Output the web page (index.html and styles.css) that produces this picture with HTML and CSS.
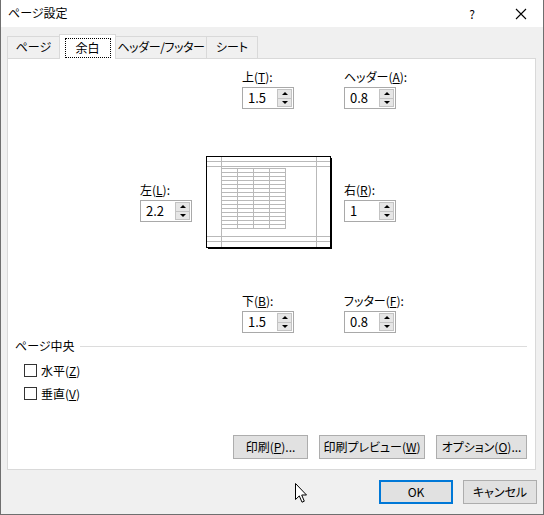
FILE: index.html
```html
<!DOCTYPE html>
<html lang="ja">
<head>
<meta charset="utf-8">
<link rel="stylesheet" href="styles.css">
</head>
<body>
<div class="window">
  <div class="titlebar">
    <span class="title">ページ設定</span>
    <span class="help">?</span>
    <span class="close"><svg width="12" height="12" viewBox="0 0 12 12"><path d="M1 1L11 11M11 1L1 11" stroke="#000" stroke-width="1.1" fill="none"/></svg></span>
  </div>
  <div class="tabs">
    <div class="tab t1">ページ</div>
    <div class="tab t2 active"><span class="focus">余白</span></div>
    <div class="tab t3"><span class="narrow">ヘッダー/フッター</span></div>
    <div class="tab t4">シート</div>
  </div>
  <div class="panel">
    <div class="margins">
      <div class="field f-top">
        <div class="lbl">上(<u>T</u>):</div>
        <div class="spin"><span class="val">1.5</span><span class="btns"><span class="b up"></span><span class="b down"></span></span></div>
      </div>
      <div class="field f-header">
        <div class="lbl">ヘッダー(<u>A</u>):</div>
        <div class="spin"><span class="val">0.8</span><span class="btns"><span class="b up"></span><span class="b down"></span></span></div>
      </div>
      <div class="field f-left">
        <div class="lbl">左(<u>L</u>):</div>
        <div class="spin"><span class="val">2.2</span><span class="btns"><span class="b up"></span><span class="b down"></span></span></div>
      </div>
      <div class="preview">
        <svg width="127" height="93" viewBox="0 0 127 93">
          <g stroke="#b9b9b9" stroke-width="1" fill="none" shape-rendering="crispEdges">
            <path d="M1 5.5H124M1 10.5H124M1 80.5H124M1 85.5H124"/>
            <path d="M15.5 1V91M110.5 1V91"/>
            <path d="M31.5 12V72M47.5 12V72M63.5 12V72M79.5 12V72"/>
            <path d="M15 12.5H80M15 16.5H80M15 20.5H80M15 24.5H80M15 28.5H80M15 32.5H80M15 36.5H80M15 40.5H80M15 44.5H80M15 48.5H80M15 52.5H80M15 56.5H80M15 60.5H80M15 64.5H80M15 68.5H80M15 72.5H80"/>
          </g>
          <g stroke="#000" stroke-width="1" fill="none" shape-rendering="crispEdges">
            <rect x="0.5" y="0.5" width="124" height="91"/>
            <path d="M125.5 2V93M2 92.5H126"/>
          </g>
        </svg>
      </div>
      <div class="field f-right">
        <div class="lbl">右(<u>R</u>):</div>
        <div class="spin"><span class="val">1</span><span class="btns"><span class="b up"></span><span class="b down"></span></span></div>
      </div>
      <div class="field f-bottom">
        <div class="lbl">下(<u>B</u>):</div>
        <div class="spin"><span class="val">1.5</span><span class="btns"><span class="b up"></span><span class="b down"></span></span></div>
      </div>
      <div class="field f-footer">
        <div class="lbl">フッター(<u>F</u>):</div>
        <div class="spin"><span class="val">0.8</span><span class="btns"><span class="b up"></span><span class="b down"></span></span></div>
      </div>
    </div>
    <div class="group"><span class="gtitle">ページ中央</span><span class="rule"></span></div>
    <div class="check c1"><span class="box"></span><span>水平(<u>Z</u>)</span></div>
    <div class="check c2"><span class="box"></span><span>垂直(<u>V</u>)</span></div>
    <div class="actions">
      <div class="btn w1">印刷(<u>P</u>)...</div>
      <div class="btn w2">印刷プレビュー(<u>W</u>)</div>
      <div class="btn w3">オプション(<u>O</u>)...</div>
    </div>
  </div>
  <div class="footer">
    <div class="btn ok">OK</div>
    <div class="btn cancel">キャンセル</div>
  </div>
  <svg class="cursor" width="13" height="21" viewBox="0 0 13 21"><path d="M0.5 0.5V16.5L4.3 12.9L7 19.2L9.3 18.2L6.7 12H11.5Z" fill="#fff" stroke="#000" stroke-width="1" stroke-linejoin="miter"/></svg>
</div>
</body>
</html>
```
FILE: styles.css
```css
* { box-sizing: border-box; }
html, body { margin: 0; padding: 0; background: #ffffff; }
body {
  font-family: "Noto Sans CJK JP", "Noto Sans", sans-serif;
  font-size: 12px;
  font-feature-settings: "palt" 1;
  color: #000;
}
u { text-decoration: underline; text-underline-offset: 1px; }
.window {
  position: relative;
  width: 544px;
  height: 515px;
  background: #f0f0f0;
  border-left: 1px solid #6f6f6f;
  border-right: 1px solid #6f6f6f;
  border-bottom: 1px solid #6f6f6f;
  overflow: hidden;
}
.titlebar {
  height: 27px;
  background: #ffffff;
  display: flex;
  align-items: center;
  padding-left: 7px;
  line-height: 16px;
}
.title { flex: 1; padding-bottom: 1px; }
.help { width: 12px; margin-right: 37px; font-size: 12px; text-align: center; }
.close { width: 12px; height: 12px; margin-right: 16px; display: flex; }
.tabs {
  height: 31px;
  display: flex;
  align-items: flex-end;
  padding-left: 6px;
}
.tab {
  height: 22px;
  border: 1px solid #d9d9d9;
  border-bottom: none;
  background: #f0f0f0;
  display: flex;
  align-items: center;
  justify-content: center;
  line-height: 16px;
  padding-bottom: 1px;
  margin-right: -1px;
  white-space: nowrap;
}
.narrow { letter-spacing: -0.4px; }
.t1 { width: 53px; }
.t2 { width: 57px; }
.t3 { width: 92px; }
.t4 { width: 52px; }
.tab.active {
  height: 25px;
  background: #ffffff;
  margin-bottom: -1px;
  position: relative;
  z-index: 2;
  align-items: flex-start;
  padding-top: 3px;
}
.focus {
  display: inline-flex;
  align-items: center;
  justify-content: center;
  width: 46px;
  height: 20px;
  border: 1px dotted #000;
}
.panel {
  margin-left: 6px;
  width: 529px;
  height: 412px;
  background: #ffffff;
  border: 1px solid #d9d9d9;
  padding: 9px 8px 10px 7px;
  display: flex;
  flex-direction: column;
}
.margins {
  margin-left: 125px;
  display: grid;
  grid-template-columns: 53px 125px 1fr;
  column-gap: 13px;
  grid-template-rows: 41px 47px 93px 43px 41px;
}
.f-top { grid-column: 2; grid-row: 1; padding-left: 36px; }
.f-header { grid-column: 3; grid-row: 1; }
.f-left { grid-column: 1; grid-row: 3; margin-top: 25px; }
.preview { grid-column: 2; grid-row: 3; line-height: 0; }
.f-right { grid-column: 3; grid-row: 3; margin-top: 25px; }
.f-bottom { grid-column: 2; grid-row: 5; padding-left: 36px; }
.f-footer { grid-column: 3; grid-row: 5; }
.lbl { height: 19px; line-height: 18px; white-space: nowrap; }
.spin {
  width: 52px;
  height: 22px;
  border: 1px solid #a9a9a9;
  background: #fff;
  display: flex;
}
.val { flex: 1; padding-left: 5px; line-height: 19px; font-size: 13px; }
.btns {
  width: 16px;
  padding: 1px 1px 1px 0;
  display: flex;
  flex-direction: column;
}
.b {
  flex: 1;
  border: 1px solid #c3c3c3;
  background: #e6e6e6;
  display: flex;
  align-items: center;
  justify-content: center;
}
.b + .b { border-top: none; }
.b::after {
  content: "";
  width: 0;
  height: 0;
  border-left: 3px solid transparent;
  border-right: 3px solid transparent;
}
.up::after { border-bottom: 3px solid #000; }
.down::after { border-top: 3px solid #000; }
.group {
  margin-top: 4px;
  display: flex;
  align-items: center;
  height: 18px;
  line-height: 18px;
}
.rule { flex: 1; height: 1px; background: #dcdcdc; margin-left: 5px; margin-top: 1px; }
.check {
  display: flex;
  align-items: center;
  height: 19px;
  line-height: 18px;
  margin-left: 9px;
  gap: 4px;
}
.c1 { margin-top: 6px; }
.c2 { margin-top: 4px; }
.box { width: 13px; height: 13px; border: 1px solid #333; background: #fff; }
.actions {
  margin-top: auto;
  display: flex;
  justify-content: flex-end;
  gap: 11px;
}
.btn {
  height: 24px;
  background: #e1e1e1;
  border: 1px solid #adadad;
  display: flex;
  align-items: center;
  justify-content: center;
  line-height: 16px;
  white-space: nowrap;
}
.w1 { width: 75px; }
.w2 { width: 106px; }
.w3 { width: 91px; }
.footer {
  display: flex;
  justify-content: flex-end;
  gap: 10px;
  padding: 10px 6px 0 0;
}
.ok { width: 74px; border: 2px solid #0078d7; }
.cancel { width: 74px; }
.cursor { position: absolute; left: 294px; top: 483px; }
```
